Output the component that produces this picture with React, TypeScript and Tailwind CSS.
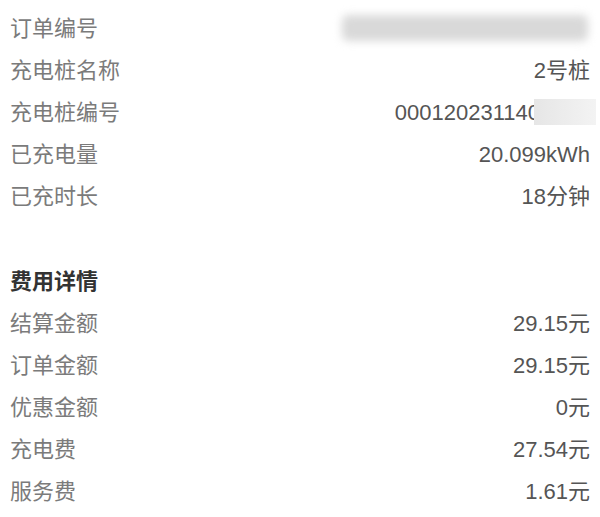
import React from "react";

const font = "font-['Liberation_Sans','Noto_Sans_CJK_SC',sans-serif]";

function Row({ label, children }: { label: string; children: React.ReactNode }) {
  return (
    <div className="flex h-[42px] items-center justify-between">
      <span className="text-[22px] text-[#7b7b7b]">{label}</span>
      <div className="flex items-center text-[22px] text-[#555555]">{children}</div>
    </div>
  );
}

export default function App() {
  return (
    <div className={`min-h-[517px] w-full bg-white pl-[10px] pr-[10px] pt-[7px] ${font}`}>
      <Row label="订单编号">
        <div className="mr-[2px] h-[26px] w-[246px] rounded-[6px] bg-[#d9d9d9] blur-[4px]" />
      </Row>
      <Row label="充电桩名称">2号桩</Row>
      <Row label="充电桩编号">
        <span>000120231140</span>
        <div className="-ml-[6px] -mr-[6px] h-[26px] w-[62px] bg-gradient-to-r from-[#e6e6e6] to-[#f3f3f3]" />
      </Row>
      <Row label="已充电量">20.099kWh</Row>
      <Row label="已充时长">18分钟</Row>

      <div className="h-[43px]" />

      <div className="flex h-[42px] items-center">
        <span className="text-[22px] font-bold text-[#333333]">费用详情</span>
      </div>
      <Row label="结算金额">29.15元</Row>
      <Row label="订单金额">29.15元</Row>
      <Row label="优惠金额">0元</Row>
      <Row label="充电费">27.54元</Row>
      <Row label="服务费">1.61元</Row>
    </div>
  );
}
